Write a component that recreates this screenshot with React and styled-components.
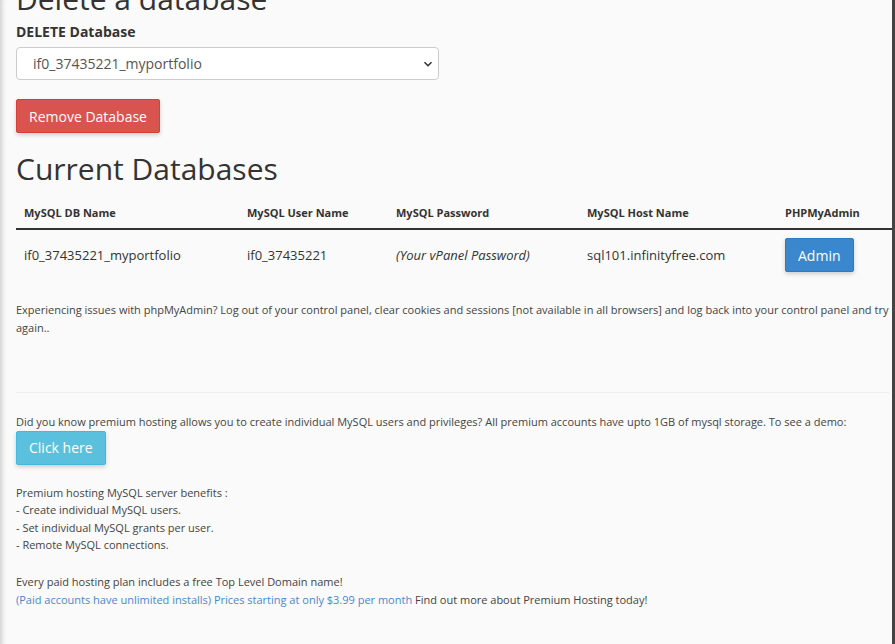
import React from 'react';
import styled, { createGlobalStyle } from 'styled-components';

const GlobalStyle = createGlobalStyle`
  html, body {
    margin: 0;
    padding: 0;
    background: #fafafa;
    overflow: hidden;
  }
  body {
    font-family: "Open Sans", "Liberation Sans", sans-serif;
    color: #333;
  }
`;

const Page = styled.main`
  height: 644px;
  box-sizing: border-box;
  padding: 0 3px 0 16px;
  border-right: 3px solid #444;
  box-shadow: inset 6px 0 5px -4px rgba(0, 0, 0, 0.18);
  overflow: hidden;
`;

const Heading = styled.h2`
  margin: ${(p) => p.$top || 0} 0 0;
  font-size: 30px;
  font-weight: 400;
  line-height: 33px;
  color: #333;
`;

const Label = styled.label`
  display: block;
  margin-top: 7px;
  font-size: 14px;
  font-weight: 700;
  line-height: 20px;
`;

const SelectWrap = styled.div`
  position: relative;
  width: 423px;
  margin-top: 5px;
`;

const Select = styled.select`
  appearance: none;
  width: 100%;
  height: 33px;
  padding: 0 30px 0 16px;
  background: #fff;
  border: 1px solid #ccc;
  border-radius: 4px;
  font-family: inherit;
  font-size: 14px;
  color: #555;
`;

const Chevron = styled.svg`
  position: absolute;
  right: 6px;
  top: 12px;
  width: 10px;
  height: 10px;
  pointer-events: none;
`;

const ButtonRow = styled.div`
  margin-top: 19px;
`;

const Button = styled.button`
  display: inline-block;
  height: 34px;
  padding: 0 12px;
  border: 1px solid ${(p) => p.$border};
  border-radius: 2px;
  background: ${(p) => p.$bg};
  color: #fff;
  font-family: inherit;
  font-size: 14px;
  box-shadow: 0 2px 4px rgba(0, 0, 0, 0.18);
`;

const Table = styled.table`
  width: 876px;
  margin-top: 12px;
  border-collapse: collapse;
  font-size: 13px;
`;

const Th = styled.th`
  width: ${(p) => p.$w}px;
  padding: 8px 8px 8px;
  text-align: left;
  font-size: 11px;
  font-weight: 700;
  border-bottom: 2px solid #333;
`;

const Td = styled.td`
  padding: 8px;
  vertical-align: middle;
  font-style: ${(p) => (p.$italic ? 'italic' : 'normal')};
  height: 34px;
`;

const Note = styled.p`
  margin: ${(p) => p.$m || 0};
  font-size: 11px;
  line-height: 17.5px;
  color: #444;
`;

const Rule = styled.hr`
  margin: 56px 0 0;
  border: 0;
  border-top: 1px solid #eee;
`;

const Link = styled.span`
  color: #4a87d0;
`;

const rows = [
  {
    db: 'if0_37435221_myportfolio',
    user: 'if0_37435221',
    pass: '(Your vPanel Password)',
    host: 'sql101.infinityfree.com',
  },
];

export default function App() {
  return (
    <Page>
      <GlobalStyle />
      <Heading $top="-18px">Delete a database</Heading>
      <Label>DELETE Database</Label>
      <SelectWrap>
        <Select defaultValue="if0_37435221_myportfolio">
          <option>if0_37435221_myportfolio</option>
        </Select>
        <Chevron viewBox="0 0 10 10">
          <path d="M1.5 3.2 L5 6.7 L8.5 3.2" fill="none" stroke="#333" strokeWidth="1.6" />
        </Chevron>
      </SelectWrap>
      <ButtonRow>
        <Button $bg="#d9534f" $border="#d43f3a">Remove Database</Button>
      </ButtonRow>
      <Heading $top="19px">Current Databases</Heading>
      <Table>
        <thead>
          <tr>
            <Th $w={207}>MySQL DB Name</Th>
            <Th $w={133}>MySQL User Name</Th>
            <Th $w={175}>MySQL Password</Th>
            <Th $w={182}>MySQL Host Name</Th>
            <Th>PHPMyAdmin</Th>
          </tr>
        </thead>
        <tbody>
          {rows.map((r) => (
            <tr key={r.db}>
              <Td>{r.db}</Td>
              <Td>{r.user}</Td>
              <Td $italic>{r.pass}</Td>
              <Td>{r.host}</Td>
              <Td>
                <Button $bg="#3a87ce" $border="#2f79bd">Admin</Button>
              </Td>
            </tr>
          ))}
        </tbody>
      </Table>
      <Note $m="21px 0 0">
        Experiencing issues with phpMyAdmin? Log out of your control panel, clear cookies and sessions [not available in all browsers] and log back into your control panel and try again..
      </Note>
      <Rule />
      <Note $m="20px 0 0">
        Did you know premium hosting allows you to create individual MySQL users and privileges? All premium accounts have upto 1GB of mysql storage. To see a demo:
      </Note>
      <Button $bg="#5bc0de" $border="#46b8da">Click here</Button>
      <Note $m="19px 0 0">
        Premium hosting MySQL server benefits :<br />
        - Create individual MySQL users.<br />
        - Set individual MySQL grants per user.<br />
        - Remote MySQL connections.
      </Note>
      <Note $m="19.5px 0 0">
        Every paid hosting plan includes a free Top Level Domain name!<br />
        <Link>(Paid accounts have unlimited installs) Prices starting at only $3.99 per month</Link> Find out more about Premium Hosting today!
      </Note>
    </Page>
  );
}
